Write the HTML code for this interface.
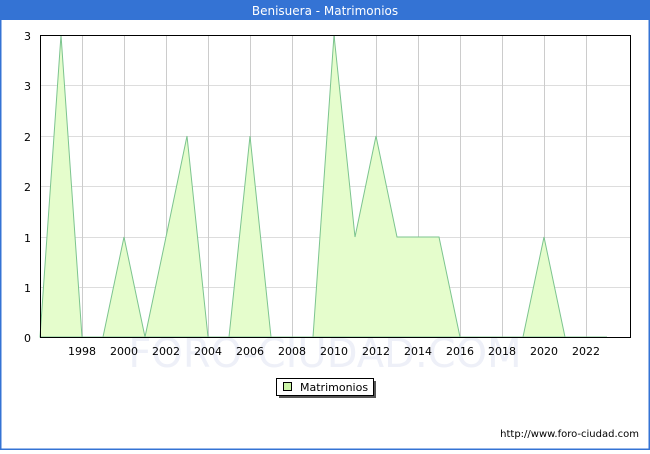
<!DOCTYPE html><html><head><style>body{margin:0;width:650px;height:450px;overflow:hidden;background:#fff;font-family:"DejaVu Sans",sans-serif}</style></head><body>
<svg width="650" height="450" xmlns="http://www.w3.org/2000/svg" font-family="DejaVu Sans, sans-serif">
<rect x="0.5" y="0.5" width="649" height="449" fill="#fff" stroke="#3473d4" stroke-width="2"/>
<rect x="0" y="0" width="650" height="20" fill="#3473d4"/>
<text x="325" y="15" fill="#fff" font-size="12" text-anchor="middle">Benisuera - Matrimonios</text>
<text x="325" y="367" fill="#eef0f8" font-size="40" text-anchor="middle">FORO-CIUDAD.COM</text>
<g stroke="#ddd" stroke-width="1">
<line x1="40" y1="85.5" x2="630" y2="85.5"/><line x1="40" y1="136.5" x2="630" y2="136.5"/><line x1="40" y1="186.5" x2="630" y2="186.5"/><line x1="40" y1="237.5" x2="630" y2="237.5"/><line x1="40" y1="287.5" x2="630" y2="287.5"/>
</g>
<g stroke="#ccc" stroke-width="1">
<line x1="82.5" y1="35" x2="82.5" y2="337"/><line x1="124.5" y1="35" x2="124.5" y2="337"/><line x1="166.5" y1="35" x2="166.5" y2="337"/><line x1="208.5" y1="35" x2="208.5" y2="337"/><line x1="250.5" y1="35" x2="250.5" y2="337"/><line x1="292.5" y1="35" x2="292.5" y2="337"/><line x1="334.5" y1="35" x2="334.5" y2="337"/><line x1="376.5" y1="35" x2="376.5" y2="337"/><line x1="418.5" y1="35" x2="418.5" y2="337"/><line x1="460.5" y1="35" x2="460.5" y2="337"/><line x1="502.5" y1="35" x2="502.5" y2="337"/><line x1="544.5" y1="35" x2="544.5" y2="337"/><line x1="586.5" y1="35" x2="586.5" y2="337"/>
</g>
<polygon fill="#e5fdcc" stroke="#7cc48f" stroke-width="1" points="40,337 61,35 82,337 103,337 124,237 145,337 166,237 187,136 208,337 229,337 250,136 271,337 292,337 313,337 334,35 355,237 376,136 397,237 418,237 439,237 460,337 481,337 502,337 523,337 544,237 565,337 586,337 607,337"/>
<rect x="40.5" y="35.5" width="590" height="302" fill="none" stroke="#000" stroke-width="1"/>
<g font-size="11" fill="#000" text-anchor="end">
<text x="31" y="40">3</text><text x="31" y="90">3</text><text x="31" y="141">2</text><text x="31" y="191">2</text><text x="31" y="242">1</text><text x="31" y="292">1</text><text x="31" y="342">0</text>
</g>
<g font-size="11" fill="#000" text-anchor="middle">
<text x="82" y="355">1998</text><text x="124" y="355">2000</text><text x="166" y="355">2002</text><text x="208" y="355">2004</text><text x="250" y="355">2006</text><text x="292" y="355">2008</text><text x="334" y="355">2010</text><text x="376" y="355">2012</text><text x="418" y="355">2014</text><text x="460" y="355">2016</text><text x="502" y="355">2018</text><text x="544" y="355">2020</text><text x="586" y="355">2022</text>
</g>
<rect x="279" y="381" width="97" height="17" fill="#555"/>
<rect x="276.5" y="378.5" width="97" height="17" fill="#fff" stroke="#000"/>
<rect x="283.5" y="382.5" width="8" height="8" fill="#ccf5a8" stroke="#000"/>
<text x="300" y="391" font-size="11">Matrimonios</text>
<text x="639" y="437" font-size="10" text-anchor="end">http://www.foro-ciudad.com</text>
</svg>
</body></html>
